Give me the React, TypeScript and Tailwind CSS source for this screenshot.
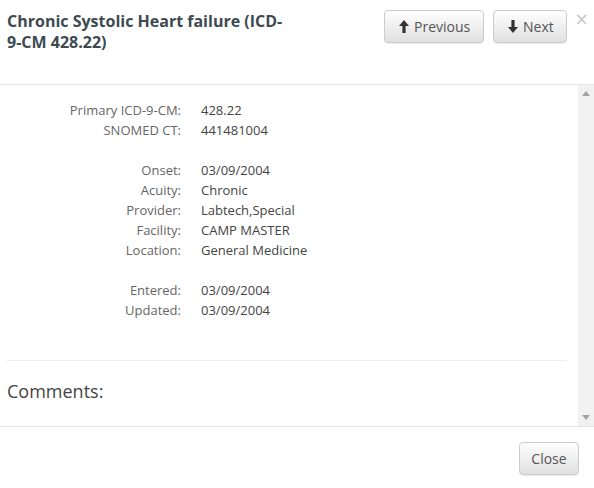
const details = [
  [
    ["Primary ICD-9-CM:", "428.22"],
    ["SNOMED CT:", "441481004"],
  ],
  [
    ["Onset:", "03/09/2004"],
    ["Acuity:", "Chronic"],
    ["Provider:", "Labtech,Special"],
    ["Facility:", "CAMP MASTER"],
    ["Location:", "General Medicine"],
  ],
  [
    ["Entered:", "03/09/2004"],
    ["Updated:", "03/09/2004"],
  ],
];

const ArrowUp = () => (
  <svg width="10" height="13" viewBox="0 0 10 13" className="fill-[#333]">
    <path d="M5 0 L10 6 L6.6 6 L6.6 13 L3.4 13 L3.4 6 L0 6 Z" />
  </svg>
);

const ArrowDown = () => (
  <svg width="10" height="13" viewBox="0 0 10 13" className="fill-[#333]">
    <path d="M5 13 L10 7 L6.6 7 L6.6 0 L3.4 0 L3.4 7 L0 7 Z" />
  </svg>
);

const btn =
  "flex items-center gap-[5px] h-[33px] rounded-[4px] border border-[#ccc] bg-gradient-to-b from-white to-[#e0e0e0] text-[14px] text-[#555] shadow-[inset_0_1px_0_rgba(255,255,255,0.15),0_1px_1px_rgba(0,0,0,0.075)]";

export default function App() {
  return (
    <div className="w-[594px] h-[488px] bg-white flex flex-col font-['Open_Sans',sans-serif] overflow-hidden">
      {/* Header */}
      <div className="h-[85px] border-b border-[#e5e5e5] flex items-start pl-[7px]">
        <h4 className="w-[288px] pt-[11px] text-[16px] leading-[21px] font-bold text-[#3d4a51]">
          Chronic Systolic Heart failure (ICD-9-CM 428.22)
        </h4>
        <div className="ml-auto flex items-start pt-[10px]">
          <button className={`${btn} w-[100px] pl-[14px]`}>
            <ArrowUp />
            Previous
          </button>
          <button className={`${btn} w-[74px] pl-[14px] ml-[9px]`}>
            <ArrowDown />
            Next
          </button>
          <span className="w-[27px] text-center text-[#c8c8c8] text-[17px] leading-[17px] mt-[1px] pl-[2px] font-['DejaVu_Sans',sans-serif]">
            ×
          </span>
        </div>
      </div>

      {/* Body */}
      <div className="h-[342px] flex border-b border-[#e5e5e5]">
        <div className="flex-1 flex flex-col px-[7px]">
          <div className="pt-[15px] flex flex-col gap-[20px] text-[13px] leading-[20px]">
            {details.map((group, i) => (
              <div key={i} className="grid grid-cols-[174px_1fr] gap-x-[20px]">
                {group.map(([label, value]) => (
                  <div key={label} className="contents">
                    <span className="text-right text-[#666]">{label}</span>
                    <span className="text-[#444]">{value}</span>
                  </div>
                ))}
              </div>
            ))}
          </div>
          <div className="mt-[40px] border-t border-[#eee] mr-[4px]" />
          <div className="pt-[17px] text-[18px] leading-[27px] text-[#444]">Comments:</div>
        </div>
        <div className="w-[16px] bg-[#f1f1f1] flex flex-col items-center justify-between py-[6px]">
          <svg width="8" height="5" viewBox="0 0 8 5" className="fill-[#a3a3a3]">
            <path d="M4 0 L8 5 L0 5 Z" />
          </svg>
          <svg width="8" height="5" viewBox="0 0 8 5" className="fill-[#a3a3a3]">
            <path d="M0 0 L8 0 L4 5 Z" />
          </svg>
        </div>
      </div>

      {/* Footer */}
      <div className="flex-1 flex justify-end items-start pt-[15px] pr-[15px]">
        <button className={`${btn} w-[60px] justify-center`}>Close</button>
      </div>
    </div>
  );
}
